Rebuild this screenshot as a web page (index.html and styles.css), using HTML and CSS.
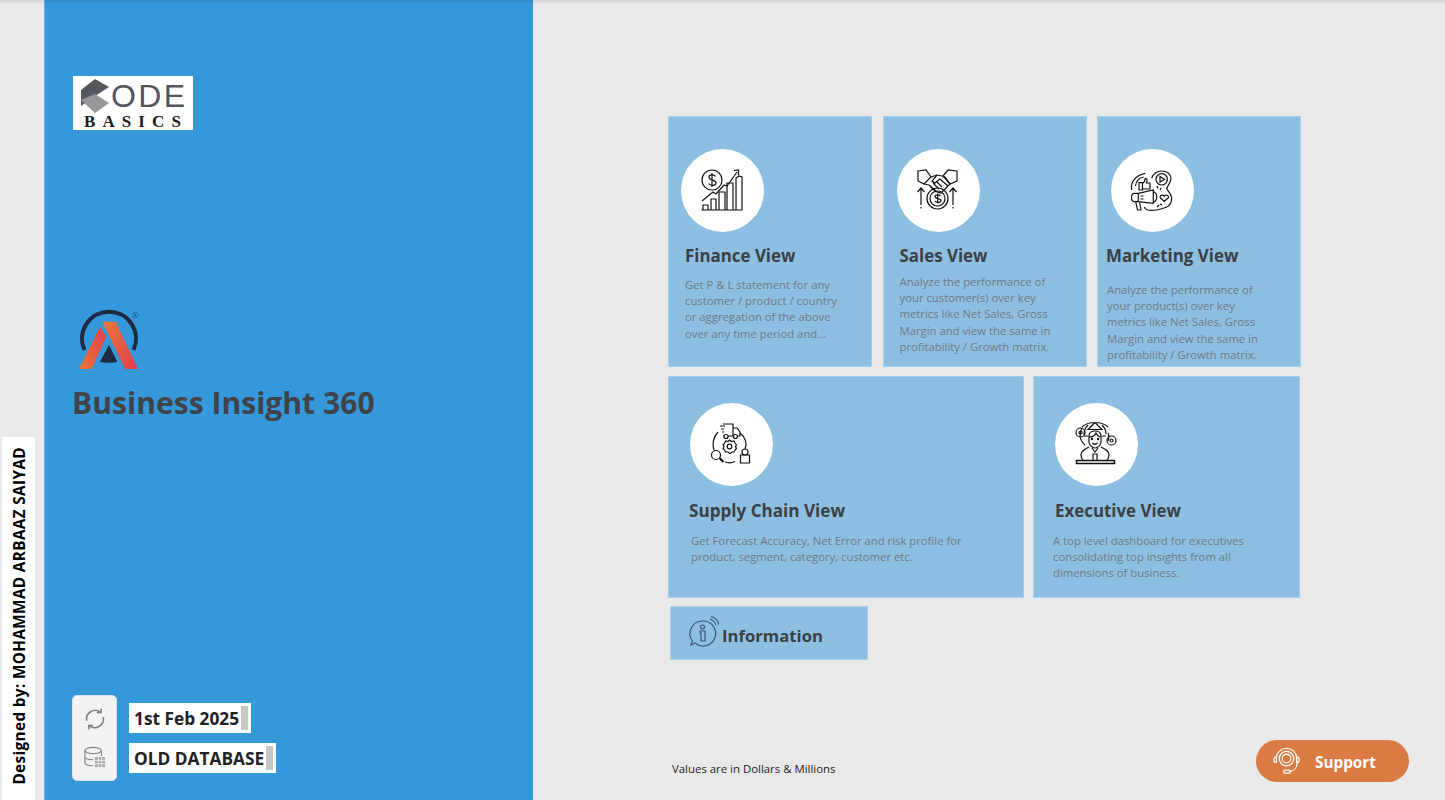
FILE: index.html
```html
<!DOCTYPE html>
<html lang="en">
<head>
<meta charset="utf-8">
<title>Business Insight 360</title>
<link rel="stylesheet" href="styles.css">
</head>
<body>
<div class="page">
  <aside class="gutter">
    <div class="credit"><span>Designed by: MOHAMMAD ARBAAZ SAIYAD</span></div>
  </aside>
  <section class="panel">
    <div class="cb-logo">
      <div class="cb-top">
        <svg class="cb-hex" viewBox="0 0 30 36"><path fill="#56585f" d="M1 12 15 1l14 8-14 9-14 10z"/><path fill="#96979d" d="M1 22l14-6 14 9-14 10z"/></svg>
        <span class="cb-ode">ODE</span>
      </div>
      <div class="cb-basics">BASICS</div>
    </div>
    <svg class="a-logo" viewBox="0 0 62 62">
      <defs>
        <linearGradient id="l1" x1="0" y1="1" x2="1" y2="0"><stop offset="0" stop-color="#ea7a3a"/><stop offset="1" stop-color="#e23a4e"/></linearGradient>
        <linearGradient id="l2" x1="0" y1="0" x2="1" y2="1"><stop offset="0" stop-color="#ea7a3a"/><stop offset="1" stop-color="#e23a4e"/></linearGradient>
      </defs>
      <path d="M5.500 41 A 27 27 0 1 1 54.500 41" fill="none" stroke="#1e2a42" stroke-width="4"/>
      <path fill="#1e2a42" d="M21 52.700 30 36l8.300 16.700c-5 1.500-12 1.500-17.300 0z"/>
      <path fill="url(#l1)" d="M0 60h12.700l14.600-32.300L21 17.700z"/>
      <path fill="url(#l2)" d="M23.300 12.700h13.400L59 60H46z"/>
      <circle cx="56.300" cy="6" r="2.800" fill="none" stroke="#1e5f92" stroke-width=".8"/>
      <circle cx="56.300" cy="6" r="1" fill="#1e5f92"/>
    </svg>
    <h1 class="app-title">Business Insight 360</h1>
    <div class="status">
      <div class="status-icons">
        <svg class="status-icon" viewBox="0 0 24 24" fill="none" stroke="#808080" stroke-width="1.700">
          <path d="M3 14a9.500 9.500 0 0 1 15-9.500"/><path d="M14 5h4.700V.6"/>
          <path d="M21 10a9.500 9.500 0 0 1-15 9.500"/><path d="M10 19H5.300v4.400"/>
        </svg>
        <svg class="status-icon" viewBox="0 0 24 24" fill="none" stroke="#808080" stroke-width="1.200">
          <ellipse cx="10" cy="5" rx="9" ry="3.500"/>
          <path d="M1 5v13c0 2 4 3.500 9 3.500M19 5v6M1 11.500c0 2 4 3.500 9 3.500"/>
          <path fill="#aaa" stroke="none" d="M12 12h11v11H12z"/>
          <path stroke="#f3f3f3" stroke-width=".9" d="M15.700 12v11M19.300 12v11M12 15.700h11M12 19.300h11"/>
        </svg>
      </div>
      <div class="status-values">
        <div class="status-value"><span>1st Feb 2025</span><i class="scroll"></i></div>
        <div class="status-value"><span>OLD DATABASE</span><i class="scroll"></i></div>
      </div>
    </div>
  </section>
  <main class="main">
    <div class="row row-top">
      <article class="card finance">
        <div class="badge">
          <svg viewBox="0 0 82 82" class="ico">
            <circle cx="31" cy="31" r="10"/>
            <path d="M34.500 27.500c-1-2-6.500-2.500-6.500 .8 0 3.700 7 2 7 5.600 0 3.300-6 3-7.300 .6M31 24v14"/>
            <path d="M21 52l11-9 3 2 8-9 3 1 10-14M53 21.500l4.500-.5v5"/>
            <path d="M22 61v-5h5v5M30 61V50h5v11M38 61V43h6v18M46 61V34h6v27M55 61V29l3-2 3 1v33M20.500 61h41"/>
          </svg>
        </div>
        <h2 class="card-title">Finance View</h2>
        <p class="card-text">Get P &amp; L statement for any customer / product / country or aggregation of the above over any time period and...</p>
      </article>
      <article class="card sales">
        <div class="badge">
          <svg viewBox="0 0 82 82" class="ico">
            <path d="M21 22l8-1 5 7-7 7-6-3zM60 22l-9-1-5 6 7 8 7-3z"/>
            <path d="M34 28l6-2 5 1 3 1 5 7-6 6-3 3-4-1-8-7-5-1"/>
            <path d="M40 26l-5 6 3 2 5-4 8 7M33 37l6 6M36 34l6 6M39 32l6 6"/>
            <circle cx="40.500" cy="49.500" r="10.500"/><circle cx="40.500" cy="49.500" r="7.500"/>
            <path d="M43.500 47c-.8-1.500-5.500-1.800-5.500 .6 0 2.800 6 1.300 6 4 0 2.500-5 2.200-6 .4M40.700 44.500v10"/>
            <path d="M24 56V39M20.500 43l3.500-4 3.500 4M24 58v1.500M56 56V39M52.500 43l3.500-4 3.500 4M56 58v1.500"/>
          </svg>
        </div>
        <h2 class="card-title">Sales View</h2>
        <p class="card-text">Analyze the performance of your customer(s) over key metrics like Net Sales, Gross Margin and view the same in profitability / Growth matrix.</p>
      </article>
      <article class="card marketing">
        <div class="badge">
          <svg viewBox="0 0 82 82" class="ico">
            <path d="M40.700 29c2-5 6-7 10-7 5 0 9.300 3 9.300 7.500 0 4-3 6-4.300 10 1 3 5 5 5 10 0 4-2 7-5 8.500-6 3-15 4-19 3-2 -.5-3-1.500-3.500-3"/>
            <path d="M20.700 41c-1.500-8 4-15 13.600-16.700M24.500 37c.5-5 3.500-8 8-9"/>
            <circle cx="50.700" cy="30.300" r="5.700"/><path d="M49 27.500l4.500 2.800-4.500 2.800z"/>
            <path d="M28 33.700h3.500V41H28zM31.500 34.500l2-2 .8-3.200c2 0 2 2 1.500 3.500l-.3 1.200h3.500v6H31.500"/>
            <path d="M23.500 44.300h3.800v8.400h-3.800c-1.700 0-3-1.800-3-4.200s1.300-4.200 3-4.200zM27.300 44.300l15-3.300v13.300l-15-1.600M42.300 42.500c2.200 1 3.400 3 3.400 5.500s-1.200 4.500-3.400 5.300M29.500 47h3M29.500 50h3M24.700 52.700 26.500 61H30l-1.500-8"/>
            <path d="M53.300 52.500l-3.800-3.500c-1.500-2 1.700-4 3.800-1.700 2.100-2.300 5.300-.3 3.800 1.700z"/>
            <path d="M46 37l1 2.500M50 39l-1 2M46 58l2-2M51 56l-2-1"/>
          </svg>
        </div>
        <h2 class="card-title">Marketing View</h2>
        <p class="card-text">Analyze the performance of your product(s) over key metrics like Net Sales, Gross Margin and view the same in profitability / Growth matrix.</p>
      </article>
    </div>
    <div class="row row-mid">
      <article class="card supply">
        <div class="badge">
          <svg viewBox="0 0 82 82" class="ico">
            <path d="M33 21h10v12h-5M43 25h4l3 4v4h-2M43 33h-1M30 23h5M31 26h3M32 29h2M33 33h1"/>
            <circle cx="36" cy="33.500" r="2"/><circle cx="45.500" cy="33.500" r="2"/>
            <path d="M28 29c-5 5-6 13-4 18M50 30c6 5 7 11 5 16M35 59c3 1 7 1 10-.5"/>
            <circle cx="39.500" cy="43.500" r="2.300"/>
            <path d="M39.500 37l2 1.500 2.500-.5 1 2 1.500 2-1 1.500 1 2-1.500 1.500-1 2h-2l-2 1.500-2-1.500h-2.500l-.8-2-1.700-1.500 1-2-1-1.500 1.700-2 .8-2 2.500 .5z"/>
            <circle cx="26" cy="52" r="4.500"/><path d="M29.500 55l4 4" stroke-width="2.200"/>
            <circle cx="55" cy="49" r="3"/><path d="M50.500 52h9v8h-9z"/>
          </svg>
        </div>
        <h2 class="card-title">Supply Chain View</h2>
        <p class="card-text">Get Forecast Accuracy, Net Error and risk profile for product, segment, category, customer etc.</p>
      </article>
      <article class="card executive">
        <div class="badge">
          <svg viewBox="0 0 82 82" class="ico">
            <path d="M27 24c6-6 20-6 26 0M30 42c-6-5-6-12-3-17M53 30c1 3 1 6 0 8M33 22c-3 3-4 7-4 10M47 22c2 2 4 5 4 9M40 19.500l-7 7h14zM29 33h4M47 33h4"/>
            <circle cx="25.500" cy="29.500" r="4.500"/><circle cx="25.500" cy="29.500" r="1.500"/>
            <circle cx="56.500" cy="37.500" r="4.500"/><circle cx="56.500" cy="37.500" r="1.500"/>
            <path d="M34 33c0-4 3-5 6-5s6 1 6 5v6c0 3-3 6-6 6s-6-3-6-6zM34 34c3 0 6-1 7-4 1 2 3 4 5 4M37.500 40c1.500 1.500 3.500 1.500 5 0"/>
            <path d="M34 44c-3 2-8 3-8 8 0 2 1 4 2 5M46 44c3 2 8 3 8 8 0 2-1 4-2 5M37 45l3 4 3-4M38 57v-6h4v6"/>
            <path d="M21.500 57.500h38v3h-38z" stroke-width="1.500"/>
            <circle cx="37" cy="36" r=".6"/><circle cx="43" cy="36" r=".6"/>
          </svg>
        </div>
        <h2 class="card-title">Executive View</h2>
        <p class="card-text">A top level dashboard for executives consolidating top insights from all dimensions of business.</p>
      </article>
    </div>
    <a class="info">
      <svg class="info-icon" viewBox="0 0 32 32" fill="none" stroke="#3a5570" stroke-width="1.200">
        <path d="M16 5a12.500 12.500 0 1 1-8 22l-4 2 1.500-4A12.500 12.500 0 0 1 16 5z"/>
        <circle cx="15.500" cy="11" r="2"/><path d="M13 15h5v10h-4v-8h-1z"/>
        <path d="M23 3c3 1 5 3 6 6M24 .5c4 1 7 4 8 8"/>
      </svg>
      <span>Information</span>
    </a>
    <footer class="footer">
      <span class="note">Values are in Dollars &amp; Millions</span>
      <a class="support">
        <svg class="support-icon" viewBox="0 0 30 30" fill="none" stroke="#fff" stroke-width="1.300">
          <circle cx="14" cy="12" r="7.500"/><circle cx="14" cy="12" r="4.500"/>
          <path d="M3.500 11C4 5 8.500 1.500 14 1.500S24 5 24.500 11"/>
          <path d="M2 10.500c-1.500 1-1.500 4.500 0 5.500h1.500v-5.500zM26 10.500c1.500 1 1.500 4.500 0 5.500h-1.500v-5.500z"/>
          <path d="M25 16c0 5-3 9-8 9.500"/><rect x="11" y="24" width="7" height="3" rx="1.500"/>
        </svg>
        <span class="support-label">Support</span>
      </a>
    </footer>
  </main>
</div>
</body>
</html>
```
FILE: styles.css
```css
* { box-sizing: border-box; }
html, body { margin: 0; padding: 0; }
body { background: #e9e9e9; font-family: "Open Sans", "Noto Sans", sans-serif; color: #404040; }
.page { display: flex; width: 1445px; height: 800px; overflow: hidden; position: relative; }
.page::before { content: ""; position: absolute; left: 0; right: 0; top: 0; height: 4px; background: linear-gradient(rgba(0,0,0,.10), rgba(0,0,0,0)); }

.gutter { width: 44px; flex: none; display: flex; align-items: flex-end; padding-left: 2px; }
.credit { width: 33px; height: 363px; background: #fff; display: flex; justify-content: center; padding: 0 0 15px 3px; align-items: flex-end; }
.credit span { writing-mode: vertical-rl; transform: rotate(180deg); font-size: 15.300px; letter-spacing: .37px; font-weight: 700; color: #000; white-space: nowrap; line-height: 1; }

.panel { width: 489px; flex: none; background: #3598db; border-left: 1px solid #6bb3e4; padding: 76px 0 19px 28px; display: flex; flex-direction: column; }
.cb-logo { width: 120px; height: 54px; background: #fff; padding: 1px 0 0 7px; }
.cb-top { display: flex; align-items: center; height: 37px; }
.cb-hex { width: 30px; height: 36px; flex: none; }
.cb-ode { font-family: "Liberation Sans", sans-serif; font-size: 32px; letter-spacing: 2.400px; color: #53555c; margin-left: 1px; line-height: 1; }
.cb-basics { font-family: "Liberation Serif", serif; font-weight: 700; font-size: 17px; letter-spacing: 7.100px; color: #1c1c1c; margin-left: 4px; line-height: 15px; }

.a-logo { width: 62px; height: 62px; margin: 179px 0 0 6px; display: block; }
.app-title { margin: 10px 0 0 -1px; font-size: 30.100px; font-weight: 700; color: #404448; line-height: 44px; white-space: nowrap; }

.status { margin-top: auto; display: flex; gap: 12px; align-items: center; }
.status-icons { width: 45px; height: 86px; background: #f3f3f3; border: 1px solid #e0e0e0; border-radius: 5px; display: flex; flex-direction: column; align-items: center; justify-content: center; gap: 16px; margin-left: -1px; }
.status-icon { width: 22px; height: 22px; display: block; }
.status-values { display: flex; flex-direction: column; gap: 10px; }
.status-value { display: flex; align-items: center; justify-content: flex-start; width: max-content; height: 30px; background: #fff; padding: 0 3px 0 5px; gap: 2px; font-size: 17.300px; font-weight: 700; color: #222; white-space: nowrap; }
.scroll { width: 7px; height: 24px; background: #c8c8c8; display: block; }

.main { flex: 1; padding: 116px 0 0 135px; display: flex; flex-direction: column; }
.row { display: flex; }
.row-top { gap: 11px 10.500px; height: 251px; }
.row-mid { gap: 9px; height: 222px; margin-top: 9px; }
.card { background: #8dbfe2; border: 1px solid #a9cfe9; flex: none; overflow: hidden; }
.row-top .card { width: 204px; }
.supply { width: 356px; }
.executive { width: 267px; }
.badge { width: 83px; height: 83px; background: #fff; border-radius: 50%; }
.ico { width: 82px; height: 82px; display: block; fill: none; stroke: #111; stroke-width: 1.200; }
.card-title { margin: 0; font-size: 16.900px; font-weight: 700; line-height: 24px; color: #3c3f44; white-space: nowrap; }
.card-text { margin: 0; font-size: 11.300px; line-height: 16.200px; color: #6d7a86; }

.row-top .badge { margin-top: 32px; }
.row-mid .badge { margin-top: 26px; }
.finance .badge { margin-left: 12px; }
.finance .card-title { margin: 12px 0 0 16px; }
.finance .card-text { margin: 9px 26px 0 16px; }
.sales .badge { margin-left: 13px; }
.sales .card-title { margin: 12px 0 0 16px; }
.sales .card-text { margin: 6px 26px 0 16px; }
.marketing .badge { margin-left: 13px; }
.marketing .card-title { margin: 12px 0 0 8px; }
.marketing .card-text { margin: 14px 33px 0 9px; }
.supply .badge { margin-left: 21px; }
.supply .card-title { margin: 13px 0 0 20px; font-size: 17.100px; }
.supply .card-text { margin: 10px 40px 0 22px; }
.executive .badge { margin-left: 21px; }
.executive .card-title { margin: 13px 0 0 21px; }
.executive .card-text { margin: 10px 30px 0 19px; }

.info { margin: 8px 0 0 2px; width: 198px; height: 54px; background: #8dbfe2; border: 1px solid #a9cfe9; display: flex; align-items: center; padding: 4px 0 0 16px; gap: 3px; font-size: 16.700px; font-weight: 700; color: #3c3f44; }
.info-icon { width: 32px; height: 32px; flex: none; margin-top: -6px; }

.footer { margin-top: auto; margin-bottom: 18px; margin-left: 4px; width: 737px; display: flex; justify-content: space-between; align-items: flex-end; }
.note { font-size: 11.400px; color: #222; line-height: 16px; margin-bottom: 5px; }
.support { width: 153px; height: 42px; border-radius: 21px; background: #d97b42; display: flex; align-items: center; padding-left: 17px; gap: 13px; color: #fff; font-size: 15.300px; font-weight: 700; }
.support-label { margin-top: 2px; }
.support-icon { width: 29px; height: 29px; flex: none; }
```
